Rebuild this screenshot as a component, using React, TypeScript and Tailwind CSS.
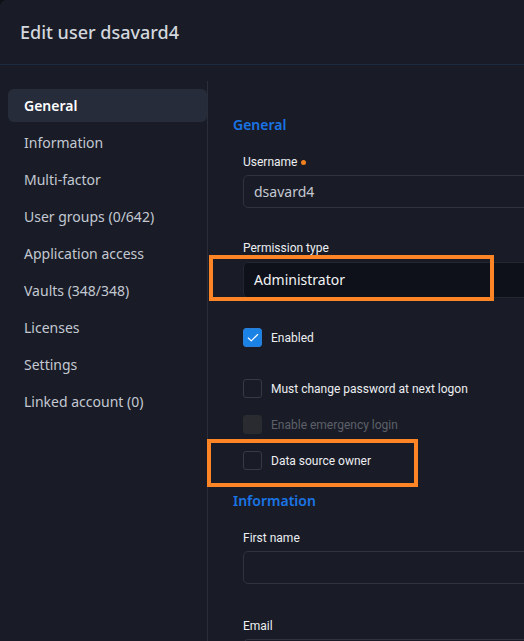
import { Check } from 'lucide-react';

const NAV = [
  'General',
  'Information',
  'Multi-factor',
  'User groups (0/642)',
  'Application access',
  'Vaults (348/348)',
  'Licenses',
  'Settings',
  'Linked account (0)',
];

const sans = "font-['Noto_Sans','Open_Sans',sans-serif]";
const form = "font-['Roboto','Liberation_Sans',sans-serif]";

function Field({ label, value, required }: { label: string; value?: string; required?: boolean }) {
  return (
    <div className="flex flex-col">
      <label className={`${form} flex h-4 items-center gap-1 text-xs leading-4 text-[#eceef2]`}>
        {label}
        {required && <span className="inline-block h-[5px] w-[5px] rounded-full bg-[#f0801e]" />}
      </label>
      <div className="mt-[5px] flex h-[33px] w-[320px] items-center rounded-[5px] border border-[#2f333e] px-[10px]">
        <span className={`${sans} text-sm text-[#c5c9d1]`}>{value}</span>
      </div>
    </div>
  );
}

function CheckRow({ label, checked, disabled }: { label: string; checked?: boolean; disabled?: boolean }) {
  const box = checked
    ? 'border-[#2a7fd8] bg-[#1b82e6]'
    : disabled
      ? 'border-[#2b2c30] bg-[#2a2b30]'
      : 'border-[#363a45] bg-transparent';
  return (
    <div className="flex h-[19px] items-center gap-[9px]">
      <span className={`flex h-[19px] w-[19px] items-center justify-center rounded-[3px] border ${box}`}>
        {checked && <Check size={14} strokeWidth={2} className="text-white" />}
      </span>
      <span className={`${form} text-xs ${disabled ? 'text-[#5d6069]' : 'text-[#eceef2]'}`}>{label}</span>
    </div>
  );
}

export default function App() {
  return (
    <div className="h-[641px] w-[524px] overflow-hidden bg-[#0e1016]">
      <div className="flex h-full flex-col rounded-tl-[6px] bg-[#191c26]">
        <div className="flex h-[65px] shrink-0 items-center border-b border-[#1b2a3e] px-5 pb-[1px]">
          <h1 className={`${sans} text-lg font-medium text-[#d3d7de]`}>Edit user dsavard4</h1>
        </div>

        <div className="flex min-h-0 flex-1">
          <nav className="w-[207px] shrink-0 pl-2 pt-[24px]">
            {NAV.map((item, i) => (
              <div
                key={item}
                className={`${sans} mb-[4px] flex h-[33px] items-center rounded-[6px] pl-4 text-sm ${
                  i === 0 ? 'bg-[#272c3a] font-semibold text-white' : 'text-[#c3c8d2]'
                }`}
              >
                {item}
              </div>
            ))}
          </nav>

          <div className="relative mt-[16px] flex-1 border-l border-[#2a2e3a] pl-[25px] pt-[34px]">
            <h2 className={`${sans} h-5 text-sm font-semibold leading-5 text-[#1a74e6]`}>General</h2>

            <div className="ml-[10px] mt-[19px] flex flex-col">
              <Field label="Username" value="dsavard4" required />

              <div className="mt-[32px] flex flex-col">
                <label className={`${form} h-4 text-xs leading-4 text-[#eceef2]`}>Permission type</label>
                <div className="mt-[6px] flex h-[36px] w-[320px] items-center rounded-[5px] border border-[#22262f] bg-[#0e111a] px-[10px]">
                  <span className={`${sans} text-sm text-[#f2f3f5]`}>Administrator</span>
                </div>
              </div>

              <div className="mt-[30px]">
                <CheckRow label="Enabled" checked />
              </div>
              <div className="mt-[32px] flex flex-col gap-[17px]">
                <CheckRow label="Must change password at next logon" />
                <CheckRow label="Enable emergency login" disabled />
                <CheckRow label="Data source owner" />
              </div>
            </div>

            <h2 className={`${sans} mt-[21px] h-5 text-sm font-semibold leading-5 text-[#1a74e6]`}>Information</h2>

            <div className="ml-[10px] mt-[19px] flex flex-col gap-[34px]">
              <Field label="First name" />
              <Field label="Email" />
            </div>

            {/* annotation boxes */}
            <div className="pointer-events-none absolute left-[1px] top-[174px] h-[46px] w-[285px] border-[4px] border-[#fd8526]" />
            <div className="pointer-events-none absolute left-[-1px] top-[358px] h-[48px] w-[211px] border-[4px] border-[#fd8526]" />
          </div>
        </div>
      </div>
    </div>
  );
}
